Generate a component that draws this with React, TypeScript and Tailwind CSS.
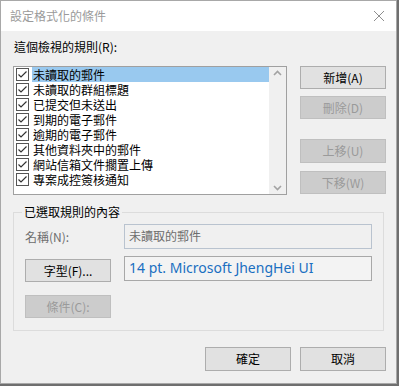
import React from 'react';

const FONT = { fontFamily: '"Noto Sans CJK TC", "Noto Sans", sans-serif' };

const rules = [
    '未讀取的郵件',
    '未讀取的群組標題',
    '已提交但未送出',
    '到期的電子郵件',
    '逾期的電子郵件',
    '其他資料夾中的郵件',
    '網站信箱文件擱置上傳',
    '專案成控簽核通知',
];

export default function App() {
    return (
        <div className="w-[399px] h-[386px] bg-[#6f6f6f] text-[12px] text-black" style={FONT}>
            <div className="w-[397px] h-[384px] border border-[#a8a8a8] bg-[#f0f0f0] flex flex-col">
                {/* Title bar */}
                <div className="h-[30px] bg-white flex items-center justify-between pl-[9px] pr-[8px]">
                    <span className="text-[12px] text-[#9a9a9a] leading-none">設定格式化的條件</span>
                    <svg width="12" height="12" viewBox="0 0 12 12" className="mr-[3px]">
                        <path d="M1 1 L11 11 M11 1 L1 11" stroke="#8e8e8e" strokeWidth="1" />
                    </svg>
                </div>

                <div className="pl-[12px]">
                    <div className="mt-[8px] h-[16px] leading-[16px] pl-[1px]">這個檢視的規則(R):</div>

                    <div className="mt-[11px] flex">
                        {/* Rule list */}
                        <div className="w-[274px] h-[129px] border border-[#a0a0a0] bg-white flex">
                            <div className="flex-1 flex flex-col">
                                {rules.map((r, i) => (
                                    <div key={r} className="h-[15px] flex items-center pl-[2px] overflow-hidden">
                                        <CheckBox />
                                        <span
                                            className={`ml-[3px] flex-1 h-[15px] leading-[15px] pl-[1px] overflow-hidden whitespace-nowrap ${i === 0 ? 'bg-[#99c9ef]' : ''}`}
                                        >
                                            {r}
                                        </span>
                                    </div>
                                ))}
                            </div>
                            <div className="w-[17px] bg-[#f0f0f0] flex flex-col justify-between items-center py-[3px]">
                                <svg width="9" height="6" viewBox="0 0 9 6">
                                    <path d="M1 5 L4.5 1.5 L8 5" stroke="#a3a3a3" strokeWidth="1.6" fill="none" />
                                </svg>
                                <svg width="9" height="6" viewBox="0 0 9 6">
                                    <path d="M1 1 L4.5 4.5 L8 1" stroke="#a3a3a3" strokeWidth="1.6" fill="none" />
                                </svg>
                            </div>
                        </div>

                        {/* Side buttons */}
                        <div className="ml-[13px] flex flex-col">
                            <Btn className="h-[23px]">新增(A)</Btn>
                            <Btn className="h-[23px] mt-[7px]" disabled>刪除(D)</Btn>
                            <Btn className="h-[24px] mt-[20px]" disabled>上移(U)</Btn>
                            <Btn className="h-[23px] mt-[8px]" disabled>下移(W)</Btn>
                        </div>
                    </div>

                    {/* Selected rule group */}
                    <div className="relative mt-[17px] w-[371px] h-[119px] border border-[#dcdcdc] pl-[11px] pt-[11px]">
                        <span className="absolute left-[8px] -top-[9px] px-[2px] bg-[#f0f0f0] leading-[16px]">已選取規則的內容</span>

                        <div className="flex items-center">
                            <span className="w-[99px] text-[#6d6d6d]">名稱(N):</span>
                            <div className="w-[248px] h-[25px] border border-[#b9c3cf] bg-[#f0f0f0] pl-[4px] leading-[22px] text-[#6d6d6d]">
                                未讀取的郵件
                            </div>
                        </div>

                        <div className="mt-[7px] flex items-start">
                            <Btn className="h-[23px] mt-[3px]">字型(F)...</Btn>
                            <div
                                className="ml-[13px] w-[248px] h-[25px] border border-[#a8a8a8] bg-[#f3f3f3] pl-[4px] leading-[22px] text-[14px] text-[#1a6fc1]"
                                style={{ fontFamily: '"Noto Sans", sans-serif' }}
                            >
                                14 pt. Microsoft JhengHei UI
                            </div>
                        </div>

                        <Btn className="h-[23px] mt-[13px]" disabled>條件(C):</Btn>
                    </div>

                    {/* Dialog buttons */}
                    <div className="mt-[16px] ml-[192px] flex gap-[9px]">
                        <Btn className="h-[24px]">確定</Btn>
                        <Btn className="h-[24px]">取消</Btn>
                    </div>
                </div>
            </div>
        </div>
    );
}

const CheckBox: React.FC = () => (
    <svg width="13" height="13" viewBox="0 0 13 13" className="shrink-0">
        <rect x="0.5" y="0.5" width="12" height="12" fill="white" stroke="#555" />
        <path d="M2.5 6.5 L5 9 L10.5 3.5" stroke="#333" strokeWidth="1.2" fill="none" />
    </svg>
);

interface BtnProps { children: React.ReactNode; className?: string; disabled?: boolean }
const Btn: React.FC<BtnProps> = ({ children, className, disabled }) => (
    <div
        className={`w-[86px] flex items-center justify-center border ${
            disabled
                ? 'bg-[#cccccc] border-[#bfbfbf] text-[#9a9a9a]'
                : 'bg-[#e1e1e1] border-[#adadad] text-black'
        } ${className ?? ''}`}
    >
        {children}
    </div>
);
